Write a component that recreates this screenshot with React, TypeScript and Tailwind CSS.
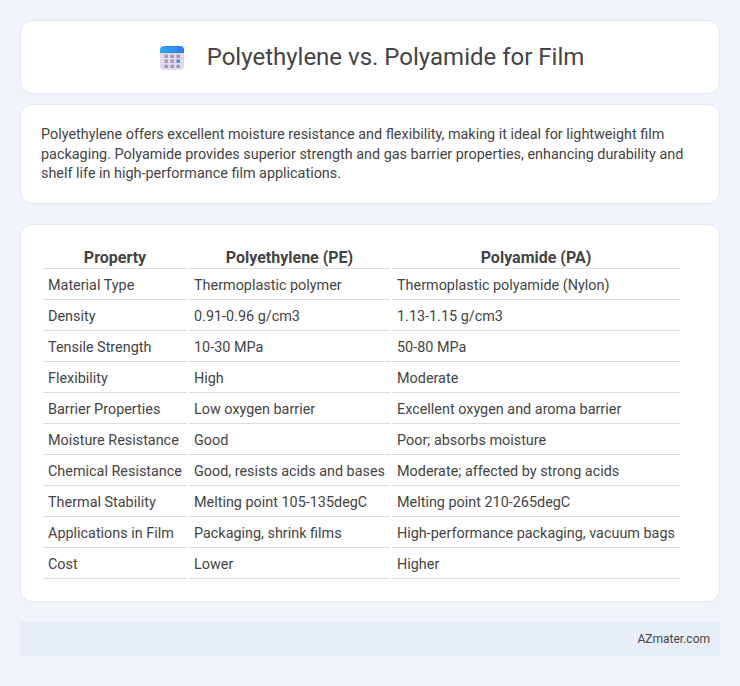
const rows = [
  ["Material Type", "Thermoplastic polymer", "Thermoplastic polyamide (Nylon)"],
  ["Density", "0.91-0.96 g/cm3", "1.13-1.15 g/cm3"],
  ["Tensile Strength", "10-30 MPa", "50-80 MPa"],
  ["Flexibility", "High", "Moderate"],
  ["Barrier Properties", "Low oxygen barrier", "Excellent oxygen and aroma barrier"],
  ["Moisture Resistance", "Good", "Poor; absorbs moisture"],
  ["Chemical Resistance", "Good, resists acids and bases", "Moderate; affected by strong acids"],
  ["Thermal Stability", "Melting point 105-135degC", "Melting point 210-265degC"],
  ["Applications in Film", "Packaging, shrink films", "High-performance packaging, vacuum bags"],
  ["Cost", "Lower", "Higher"],
];

function CalendarIcon() {
  return (
    <svg width="24" height="24" viewBox="0 0 24 24" className="block">
      <defs>
        <linearGradient id="calTop" x1="0" y1="0" x2="1" y2="0">
          <stop offset="0" stopColor="#28a8f5" />
          <stop offset="1" stopColor="#3a76f0" />
        </linearGradient>
      </defs>
      <rect x="0" y="0" width="24" height="24" rx="4" fill="#e0d8ee" />
      <path d="M0 7V4a4 4 0 0 1 4-4h16a4 4 0 0 1 4 4v3z" fill="url(#calTop)" />
      {[4.5, 10.5, 16.5].map((x) =>
        [8.7, 13.4, 18.7].map((y) => (
          <rect key={`${x}-${y}`} x={x} y={y} width="3.4" height="3.4" rx="0.4" fill={x === 16.5 && y === 13.4 ? "#2f8af5" : "#9d98ad"} />
        ))
      )}
    </svg>
  );
}

export default function App() {
  return (
    <div className="min-h-[686px] bg-[#f0f4f9] p-5 font-['Roboto',sans-serif] text-[#444444]">
      <div className="flex flex-col">
        <header className="flex h-[74px] items-center justify-center rounded-xl border border-[#e2e8f0] bg-white pl-1">
          <div className="mt-0.5"><CalendarIcon /></div>
          <h1 className="ml-[23px] text-2xl leading-[36px] font-normal text-[#444444]">Polyethylene vs. Polyamide for Film</h1>
        </header>
        <section className="mt-2.5 h-[100px] rounded-xl border border-[#e2e8f0] bg-white px-5 py-5 text-[14.4px] leading-[19.5px] text-[#444444]">
          Polyethylene offers excellent moisture resistance and flexibility, making it ideal for lightweight film packaging. Polyamide provides superior strength and gas barrier properties, enhancing durability and shelf life in high-performance film applications.
        </section>
        <section className="mt-5 h-[378px] rounded-xl border border-[#e2e8f0] bg-white px-5 pt-5">
          <table className="border-separate border-spacing-[2px] text-[14.4px] text-[#444444]">
            <thead>
              <tr>
                <th className="h-[22px] w-[144px] border-b border-[#dddddd] p-0 text-center text-base leading-[20px] font-bold">Property</th>
                <th className="h-[22px] w-[201px] border-b border-[#dddddd] p-0 text-center text-base leading-[20px] font-bold">Polyethylene (PE)</th>
                <th className="h-[22px] w-[288px] border-b border-[#dddddd] p-0 text-center text-base leading-[20px] font-bold">Polyamide (PA)</th>
              </tr>
            </thead>
            <tbody>
              {rows.map((r) => (
                <tr key={r[0]}>
                  {r.map((c, i) => (
                    <td key={i} className="h-[29px] border-b border-[#dddddd] px-[5px] py-0 text-left leading-[19px] whitespace-nowrap">{c}</td>
                  ))}
                </tr>
              ))}
            </tbody>
          </table>
        </section>
        <footer className="mt-5 flex h-[34px] items-center justify-end bg-[#e8eef8] px-2.5 text-xs text-[#444444]">AZmater.com</footer>
      </div>
    </div>
  );
}
